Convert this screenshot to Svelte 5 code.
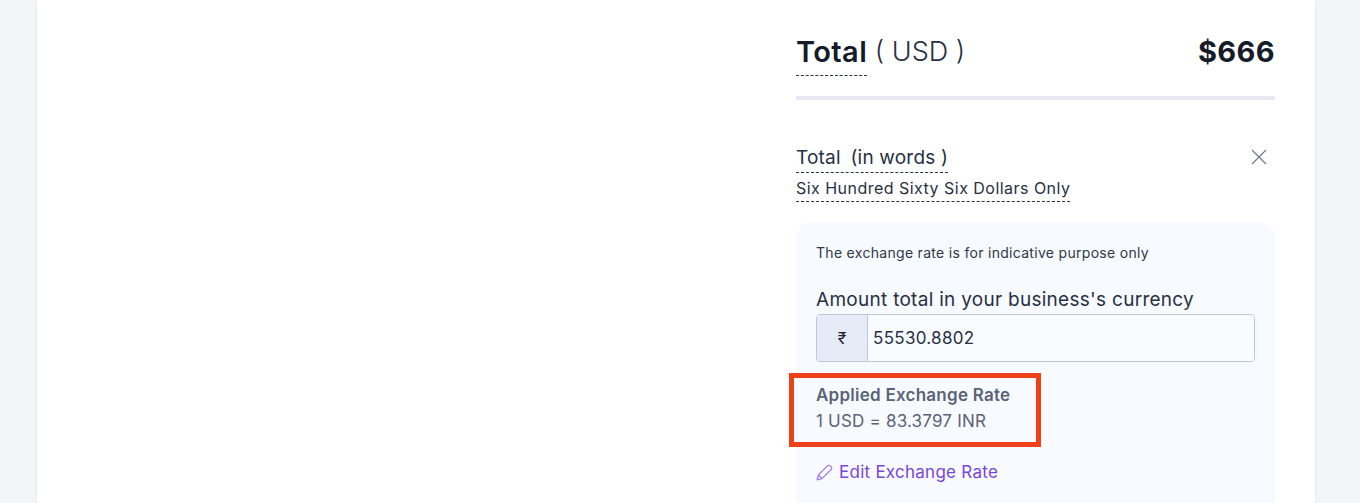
<script lang="ts">
  const rate = { base: '1 USD', quote: '83.3797 INR' };
  const amount = '55530.8802';
</script>

<div class="page">
  <main class="card">
    <section class="summary">
      <div class="total-row">
        <div class="total-label"><span class="dashed strong">Total</span><span class="paren">&nbsp;( USD )</span></div>
        <div class="total-value">$666</div>
      </div>

      <div class="words">
        <div class="words-text">
          <span class="dashed words-label">Total&ensp;(in words )</span>
          <span class="dashed words-value">Six Hundred Sixty Six Dollars Only</span>
        </div>
        <button class="close" aria-label="Close">
          <svg width="16" height="16" viewBox="0 0 16 16" fill="none" stroke="#6b7588" stroke-width="1.1">
            <path d="M1 1 15 15M15 1 1 15" />
          </svg>
        </button>
      </div>

      <div class="panel">
        <p class="note">The exchange rate is for indicative purpose only</p>
        <label class="amount-label" for="amt">Amount total in your business's currency</label>
        <div class="input-group">
          <span class="addon">₹</span>
          <input id="amt" value={amount} />
        </div>
        <div class="applied">
          <div class="applied-title">Applied Exchange Rate</div>
          <div class="applied-rate">{rate.base} = {rate.quote}</div>
        </div>
        <a class="edit" href="#edit">
          <svg width="17" height="17" viewBox="0 0 16 16" fill="none" stroke="#a47fe8" stroke-width="1.2" stroke-linejoin="round">
            <path d="M1 15 2.2 10.4 10.8 1.8a1.9 1.9 0 0 1 2.7 0l.7.7a1.9 1.9 0 0 1 0 2.7L5.6 13.8ZM2.2 10.4l3.4 3.4" />
          </svg>
          Edit Exchange Rate
        </a>
      </div>
    </section>
  </main>
</div>

<style>
  :global(body) {
    margin: 0;
    background: #f4f5f7;
    overflow: hidden;
  }

  .page {
    height: 503px;
    padding: 0 45px 0 37px;
    overflow: hidden;
    font-family: Inter, "Open Sans", sans-serif;
    color: #1d2433;
  }

  .card {
    display: flex;
    justify-content: flex-end;
    height: 100%;
    padding: 0 40px 0 0;
    background: #fff;
    box-shadow: 0 0 3px rgba(210, 214, 225, 0.6);
  }

  .summary {
    width: 479px;
    padding-top: 35px;
  }

  .total-row {
    display: flex;
    justify-content: space-between;
    align-items: flex-start;
    height: 61px;
    border-bottom: 4px solid #e6e9f4;
  }

  .total-label {
    display: flex;
    font-size: 27px;
    line-height: 33px;
    color: #273044;
  }

  .dashed {
    border-bottom: 1px dashed #2a3242;
  }

  .strong {
    height: 40px;
    font-size: 29px;
    font-weight: 600;
    letter-spacing: 0.4px;
    color: #151b28;
  }

  .paren {
    font-weight: 300;
  }

  .total-value {
    font-size: 29px;
    line-height: 33px;
    font-weight: 700;
    letter-spacing: 0.4px;
    color: #151b28;
  }

  .words {
    display: flex;
    justify-content: space-between;
    margin-top: 47px;
  }

  .words-text {
    display: flex;
    flex-direction: column;
    align-items: flex-start;
  }

  .words-label {
    font-size: 19px;
    line-height: 22px;
    letter-spacing: 0.2px;
    padding-bottom: 3px;
    color: #273044;
  }

  .words-value {
    margin-top: 5px;
    font-size: 16px;
    line-height: 20px;
    letter-spacing: 0.47px;
    padding-bottom: 3px;
    color: #273044;
  }

  .close {
    align-self: flex-start;
    height: 16px;
    margin: 2px 8px 0 0;
    padding: 0;
    border: 0;
    background: none;
  }

  .panel {
    margin-top: 20px;
    padding: 21px 20px 0;
    height: 290px;
    box-sizing: border-box;
    background: #f7faff;
    border-radius: 16px;
  }

  .note {
    margin: 0;
    font-size: 14px;
    line-height: 20px;
    letter-spacing: 0.3px;
    color: #2f3848;
  }

  .amount-label {
    display: block;
    margin-top: 24px;
    font-size: 19px;
    line-height: 26px;
    letter-spacing: 0.28px;
    color: #273044;
  }

  .input-group {
    display: flex;
    height: 48px;
    margin-top: 1px;
    box-sizing: border-box;
    border: 1px solid #bcc8dc;
    border-radius: 4px;
    overflow: hidden;
  }

  .addon {
    display: flex;
    align-items: center;
    justify-content: center;
    width: 50px;
    background: #e6ecf7;
    border-right: 1px solid #bcc8dc;
    font-size: 16px;
  }

  input {
    flex: 1;
    min-width: 0;
    padding: 0 5px;
    border: 0;
    outline: 0;
    background: #f9fbff;
    font: inherit;
    font-size: 17px;
    letter-spacing: 0.3px;
    color: #273044;
  }

  .applied {
    position: relative;
    margin-top: 21px;
  }

  /* red annotation drawn over the screenshot */
  .applied::after {
    content: '';
    position: absolute;
    inset: -10px auto -13px -27px;
    width: 252px;
    border: 5px solid #ee4119;
    box-sizing: border-box;
  }

  .applied-title {
    font-size: 17px;
    line-height: 25px;
    font-weight: 600;
    letter-spacing: 0.25px;
    color: #5a6377;
  }

  .applied-rate {
    font-size: 17px;
    line-height: 26px;
    letter-spacing: 0.2px;
    color: #5a6377;
  }

  .edit {
    display: flex;
    align-items: center;
    gap: 6px;
    margin-top: 26px;
    font-size: 17px;
    line-height: 24px;
    letter-spacing: 0.26px;
    color: #7a46d8;
    text-decoration: none;
  }
</style>
